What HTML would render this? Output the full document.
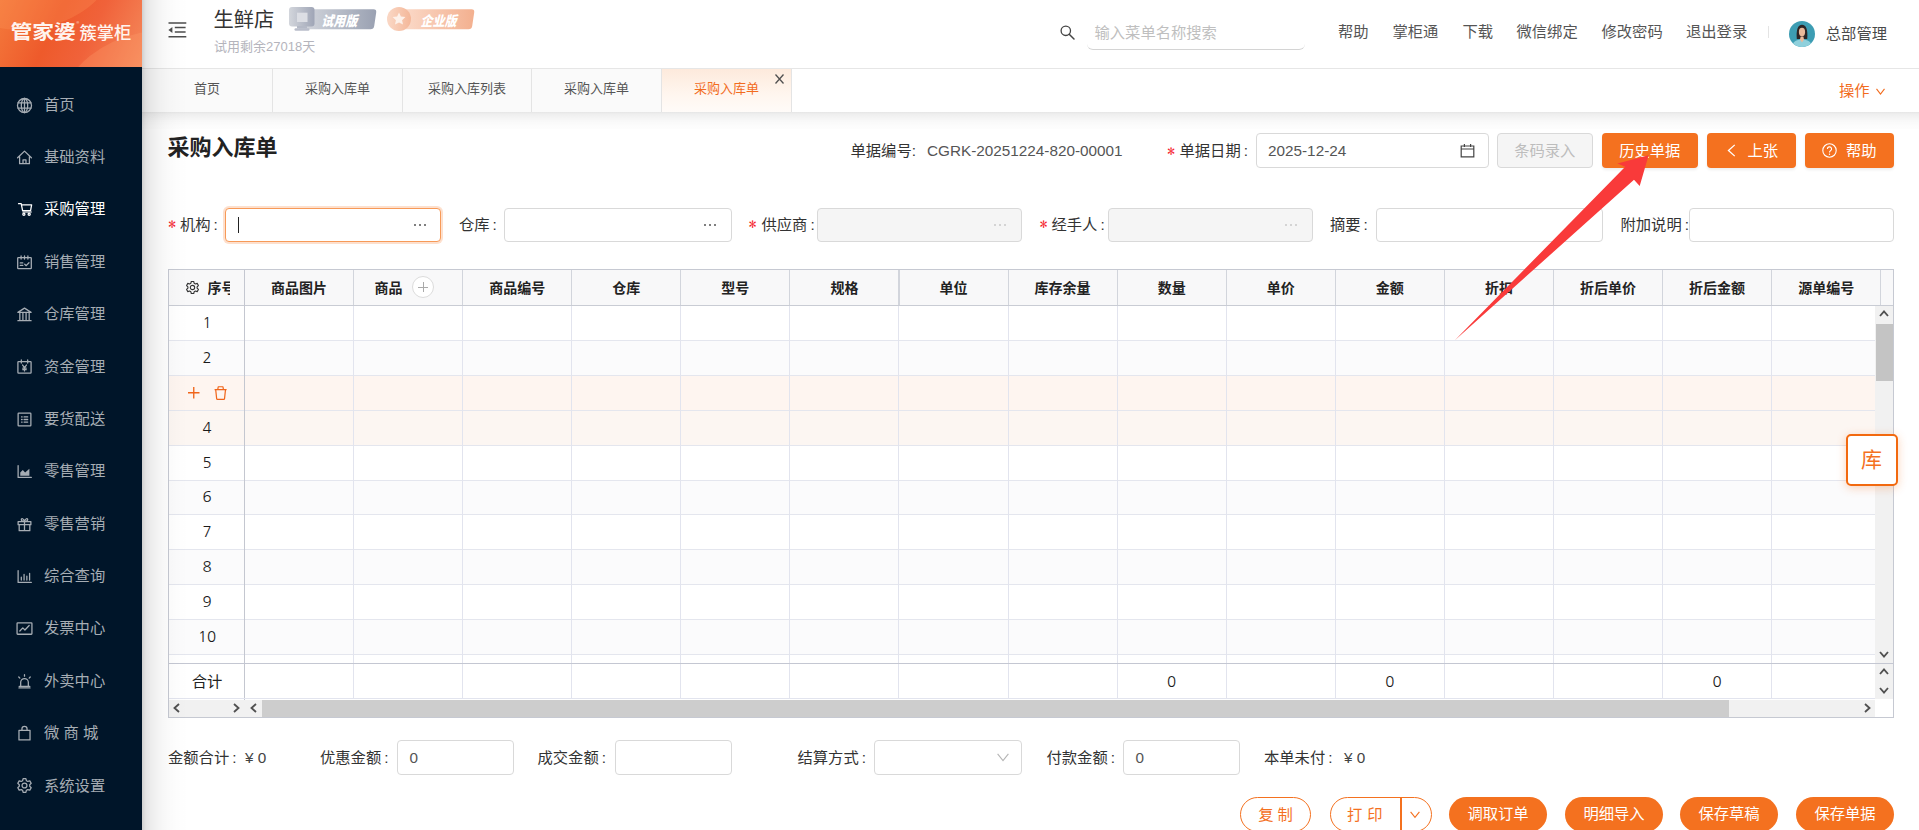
<!DOCTYPE html>
<html lang="zh-CN">
<head>
<meta charset="utf-8">
<title>采购入库单</title>
<style>
*{box-sizing:border-box;margin:0;padding:0}
html,body{width:1919px;height:830px;overflow:hidden;background:#fff}
body{position:relative;font-family:"Liberation Sans","Noto Sans CJK SC",sans-serif;font-size:15.3px;color:#333}
.abs{position:absolute}
/* sidebar */
#side{position:absolute;left:0;top:0;width:142px;height:830px;background:#001529;z-index:5}
#logo{position:absolute;left:0;top:0;width:142px;height:67px;overflow:hidden;
 background:linear-gradient(115deg,#f47a3c 0%,#ee5a2b 38%,#f0623a 62%,#f58a5c 100%)}
#logo .w1{position:absolute;left:-40px;top:-62px;width:150px;height:90px;border-radius:50%;background:rgba(255,150,90,.28);transform:rotate(-12deg)}
#logo .w2{position:absolute;left:60px;top:38px;width:140px;height:80px;border-radius:50%;background:rgba(255,160,110,.28);transform:rotate(-25deg)}
#logo b{position:absolute;color:#fff4ef;white-space:nowrap;line-height:1}
#logo .l1{left:10.5px;top:20.8px;font-size:21.8px;font-weight:700;letter-spacing:0;transform:scaleY(.88);transform-origin:0 100%}
#logo .l2{left:79.5px;top:24.6px;font-size:17.3px;font-weight:500}
#logo .r{left:76.5px;top:21.5px;font-size:3.5px;font-weight:400}
.m{position:absolute;left:0;width:142px;height:40px;line-height:40px;color:#a6adb4;font-size:15.3px;white-space:nowrap}
.m.on{color:#fff}
.m .mi{position:absolute;left:16.2px;top:12.3px;width:17px;height:17px}
.m span{position:absolute;left:44px;top:.4px}
/* header */
#hdr{position:absolute;left:142px;top:0;width:1777px;height:69px;background:#fff;border-bottom:1px solid #e6e6e6}
#shadowL{position:absolute;left:142px;top:0;width:46px;height:830px;background:linear-gradient(90deg,rgba(0,0,0,.19) 0,rgba(0,0,0,.14) 2px,rgba(0,0,0,.105) 4px,rgba(0,0,0,.08) 8px,rgba(0,0,0,.06) 13px,rgba(0,0,0,.04) 18px,rgba(0,0,0,.02) 26px,rgba(0,0,0,.008) 36px,rgba(0,0,0,0) 46px);z-index:4;pointer-events:none}
.hl1{position:absolute;top:21px;line-height:22px;font-size:15.3px;color:#555;white-space:nowrap}
/* tabs */
#tabs{position:absolute;left:142px;top:69px;width:1777px;height:43px;background:#fff}
.tab{position:absolute;top:0;height:43px;background:#fafafa;border-right:1px solid #e4e4e4;text-align:center;line-height:40px;font-size:13px;color:#555}
.tab.on{background:linear-gradient(180deg,#fdeadc 0%,#fff6ef 60%,#fffbf8 100%);color:#f26c1e;line-height:40.8px}
#tabshadow{position:absolute;left:142px;top:112px;width:1777px;height:17px;background:linear-gradient(180deg,rgba(0,0,0,.1) 0,rgba(0,0,0,.068) 2px,rgba(0,0,0,.05) 4.5px,rgba(0,0,0,.03) 8px,rgba(0,0,0,.018) 11px,rgba(0,0,0,.01) 14px,rgba(0,0,0,.007) 17px)}
/* form */
.lb{position:absolute;margin-top:.5px;line-height:22px;font-size:15.3px;color:#333;white-space:nowrap}
.star{position:absolute;color:#f5222d;font-size:15.5px;line-height:22px;font-family:"IPAGothic","Liberation Mono",monospace}
.ip{position:absolute;height:34.5px;border:1px solid #d9d9d9;border-radius:4px;background:#fff}
.ip.dis{background:#f5f5f5}
.dots{position:absolute;top:15.3px;width:12px;height:3px}
.dots i{position:absolute;top:0;width:2px;height:2px;border-radius:50%;background:#555}
.dis .dots i{background:#c8c8c8}
.btn{position:absolute;top:133px;height:34.5px;border-radius:4px;background:#f4711f;color:#fff;font-size:15.3px;line-height:35.4px;text-align:center;white-space:nowrap;box-shadow:0 2px 3px rgba(0,0,0,.07)}
/* table */
#tb{position:absolute;left:168px;top:269px;width:1725.5px;height:449px;border:1px solid #c6c9d2;background:#fff}
.thbg{position:absolute;left:169px;top:270px;width:1723.5px;height:35px;background:#f8f8f9}
.th{position:absolute;top:277px;line-height:22px;text-align:center;font-weight:700;font-size:14px;color:#222;white-space:nowrap}
.rw{position:absolute;left:169px;width:1706px}
.hl{position:absolute;left:169px;width:1706px;height:1px;background:#e4e6ee}
.vl{position:absolute;top:270px;width:1px;height:428.5px;background:#e2e4ee}
.rn{position:absolute;left:169px;width:76px;text-align:center;line-height:20px;font-size:15px;color:#1a1a1a;font-family:"NanumGothic","Liberation Sans",sans-serif}
.fv{position:absolute;top:672.2px;line-height:20px;text-align:center;font-size:15px;color:#1a1a1a;font-family:"NanumGothic","Liberation Sans",sans-serif}
.plus{position:absolute;left:58.5px;top:-1px;width:22px;height:22px;border:1px solid #dcdcdc;border-radius:50%;background:#fff}
.plus:before{content:"";position:absolute;left:5px;top:9.5px;width:10px;height:1px;background:#aaa}
.plus:after{content:"";position:absolute;left:9.5px;top:5px;width:1px;height:10px;background:#aaa}
/* bottom buttons */
.pb{position:absolute;top:796.5px;height:35px;border-radius:18px;font-size:15.3px;line-height:33px;text-align:center;white-space:nowrap}
.pb.f{background:#f4711f;color:#fff}
.pb.o{background:#fff;border:1.3px solid #f4711f;color:#f4711f}
svg{display:block;overflow:visible}
</style>
</head>
<body>
<!-- ===== sidebar ===== -->
<div id="side">
 <div id="logo"><div class="w1"></div><div class="w2"></div><b class="l1">管家婆</b><b class="r">®</b><b class="l2">簇掌柜</b></div>
<div class="m" style="top:84.3px"><svg class="mi" viewBox="0 0 16 16"><circle cx="8" cy="8" r="6.6" fill="none" stroke="#a6adb4" stroke-width="1.2" stroke-linecap="round" stroke-linejoin="round"/><ellipse cx="8" cy="8" rx="3" ry="6.6" fill="none" stroke="#a6adb4" stroke-width="1.2" stroke-linecap="round" stroke-linejoin="round"/><path d="M8 1.4v13.2M1.8 5.6h12.4M1.8 10.4h12.4" fill="none" stroke="#a6adb4" stroke-width="1.2" stroke-linecap="round" stroke-linejoin="round"/></svg><span>首页</span></div>
<div class="m" style="top:136.7px"><svg class="mi" viewBox="0 0 16 16"><path d="M1.5 8.2 8 2l6.5 6.2M3.4 7v6.8h9.2V7M6.6 13.8v-3.6h2.8v3.6" fill="none" stroke="#a6adb4" stroke-width="1.2" stroke-linecap="round" stroke-linejoin="round"/></svg><span>基础资料</span></div>
<div class="m on" style="top:189.1px"><svg class="mi" viewBox="0 0 16 16"><g transform="translate(.8 .6)"><path d="M1.6 1.9h2.5l1.3 6.5h7.5l1-5.3H4.5" fill="none" stroke="#ffffff" stroke-width="1.2" stroke-linecap="round" stroke-linejoin="round"/><rect x="5.3" y="8.8" width="8.7" height="1.9" fill="#ffffff" opacity=".55"/><circle cx="6.6" cy="11.9" r="1" fill="none" stroke="#ffffff" stroke-width="1.2" stroke-linecap="round" stroke-linejoin="round"/><circle cx="11.6" cy="11.9" r="1" fill="none" stroke="#ffffff" stroke-width="1.2" stroke-linecap="round" stroke-linejoin="round"/></g></svg><span>采购管理</span></div>
<div class="m" style="top:241.4px"><svg class="mi" viewBox="0 0 16 16"><rect x="1.6" y="3.4" width="12.8" height="10.4" rx=".6" fill="none" stroke="#a6adb4" stroke-width="1.2" stroke-linecap="round" stroke-linejoin="round"/><path d="M4.8 1.8v3M8 1.8v3M11.2 1.8v3M4 8.4h2.4M4 10.8h2.4M8.2 9.6l1.4 1.4 2.6-2.8" fill="none" stroke="#a6adb4" stroke-width="1.2" stroke-linecap="round" stroke-linejoin="round"/></svg><span>销售管理</span></div>
<div class="m" style="top:293.8px"><svg class="mi" viewBox="0 0 16 16"><path d="M1.8 6 8 2l6.2 4zM1.8 13.8h12.4M3.6 6.4v7M6.5 6.4v7M9.5 6.4v7M12.4 6.4v7" fill="none" stroke="#a6adb4" stroke-width="1.2" stroke-linecap="round" stroke-linejoin="round"/></svg><span>仓库管理</span></div>
<div class="m" style="top:346.2px"><svg class="mi" viewBox="0 0 16 16"><rect x="1.8" y="3.4" width="12.4" height="10.8" rx=".6" fill="none" stroke="#a6adb4" stroke-width="1.2" stroke-linecap="round" stroke-linejoin="round"/><path d="M5 1.8v3M11 1.8v3M6.2 6.6 8 9l1.8-2.4M8 9v3.2M6.4 9.6h3.2M6.4 11h3.2" fill="none" stroke="#a6adb4" stroke-width="1.2" stroke-linecap="round" stroke-linejoin="round"/></svg><span>资金管理</span></div>
<div class="m" style="top:398.6px"><svg class="mi" viewBox="0 0 16 16"><rect x="2" y="2" width="12" height="12" rx=".6" fill="none" stroke="#a6adb4" stroke-width="1.2" stroke-linecap="round" stroke-linejoin="round"/><path d="M5.2 5.6h.6M5.2 8h.6M5.2 10.4h.6M7.6 5.6h3.4M7.6 8h3.4M7.6 10.4h3.4" fill="none" stroke="#a6adb4" stroke-width="1.2" stroke-linecap="round" stroke-linejoin="round"/></svg><span>要货配送</span></div>
<div class="m" style="top:451.0px"><svg class="mi" viewBox="0 0 16 16"><path d="M2 2.4v11.2h12.4" fill="none" stroke="#a6adb4" stroke-width="1.2" stroke-linecap="round" stroke-linejoin="round"/><path d="M4 12V9l2.4-2.4L8.6 9l4-3.6V12z" fill="#a6adb4" stroke="none"/></svg><span>零售管理</span></div>
<div class="m" style="top:503.3px"><svg class="mi" viewBox="0 0 16 16"><rect x="2" y="5.2" width="12" height="3" fill="none" stroke="#a6adb4" stroke-width="1.2" stroke-linecap="round" stroke-linejoin="round"/><path d="M3 8.2v5.6h10V8.2M8 5.2v8.6M8 5.2C6.4 5.2 5 4.6 5 3.4 5 2 7.2 2 8 5.2zM8 5.2c1.600 0 3-.6 3-1.800C11 2 8.800 2 8 5.200z" fill="none" stroke="#a6adb4" stroke-width="1.2" stroke-linecap="round" stroke-linejoin="round"/></svg><span>零售营销</span></div>
<div class="m" style="top:555.7px"><svg class="mi" viewBox="0 0 16 16"><path d="M2 2.400v11.200h12.400M5 11.400V8.600M7.600 11.400V6M10.200 11.400V7.600M12.800 11.400V5" fill="none" stroke="#a6adb4" stroke-width="1.2" stroke-linecap="round" stroke-linejoin="round"/></svg><span>综合查询</span></div>
<div class="m" style="top:608.1px"><svg class="mi" viewBox="0 0 16 16"><rect x="1" y="2.600" width="14" height="10.800" rx=".6" fill="none" stroke="#a6adb4" stroke-width="1.2" stroke-linecap="round" stroke-linejoin="round"/><path d="M3.600 10.400 6.400 7.400l2 2 4-4.200" fill="none" stroke="#a6adb4" stroke-width="1.2" stroke-linecap="round" stroke-linejoin="round"/></svg><span>发票中心</span></div>
<div class="m" style="top:660.5px"><svg class="mi" viewBox="0 0 16 16"><path d="M4.400 12.600V8.800a3.600 3.600 0 0 1 7.200 0v3.800M2.800 14h10.400M3 12.600h10M8 1.600v1.400M2.600 3.800l1 1M13.400 3.800l-1 1" fill="none" stroke="#a6adb4" stroke-width="1.2" stroke-linecap="round" stroke-linejoin="round"/></svg><span>外卖中心</span></div>
<div class="m" style="top:712.9px"><svg class="mi" viewBox="0 0 16 16"><path d="M2.800 5h10.400v9H2.800zM5.600 5V3.600a2.400 2.400 0 0 1 4.800 0V5" fill="none" stroke="#a6adb4" stroke-width="1.2" stroke-linecap="round" stroke-linejoin="round"/></svg><span>微 商 城</span></div>
<div class="m" style="top:765.2px"><svg class="mi" viewBox="0 0 16 16"><circle cx="8" cy="8" r="2.300" fill="none" stroke="#a6adb4" stroke-width="1.2" stroke-linecap="round" stroke-linejoin="round"/><path d="M6.700 1.600h2.600l.5 1.900 1.300.7 1.900-.6 1.300 2.300-1.400 1.400v1.400l1.400 1.400-1.300 2.300-1.900-.6-1.300.7-.5 1.900H6.700l-.5-1.900-1.300-.7-1.900.6-1.300-2.300 1.400-1.400V7.300L1.700 5.900 3 3.600l1.900.6 1.300-.7z" fill="none" stroke="#a6adb4" stroke-width="1.2" stroke-linecap="round" stroke-linejoin="round"/></svg><span>系统设置</span></div>

</div>
<div id="shadowL"></div>

<!-- ===== header ===== -->
<div id="hdr">
 <svg class="abs" style="left:26px;top:22px" width="19" height="16" viewBox="0 0 19 16"><path d="M.5.900h17.800M6.800 5.500h10.800M6.800 10.100h10.800M.5 14.800h17.800" stroke="#4d4d4d" stroke-width="1.500" fill="none"/><path d="M.4 8 4.400 5v6z" fill="#4d4d4d"/></svg>
 <div class="abs" style="left:71.500px;top:5.500px;font-size:20.300px;line-height:28px;color:#333;white-space:nowrap">生鲜店</div>
 <div class="abs" style="left:72px;top:37.500px;font-size:13px;line-height:18px;color:#b4b4bc;white-space:nowrap">试用剩余27018天</div>
 <!-- badge trial -->
 <svg class="abs" style="left:147px;top:6px" width="88" height="26" viewBox="0 0 88 26">
  <defs><linearGradient id="g1" x1="0" x2="1" y1="0" y2="0"><stop offset="0" stop-color="#d6d9df"/><stop offset="1" stop-color="#9aa1b2"/></linearGradient>
  <linearGradient id="g1b" x1="0" x2="1" y1="0" y2="0"><stop offset="0" stop-color="#d3d6dc"/><stop offset="1" stop-color="#9fa5b6"/></linearGradient></defs>
  <path d="M12 3.200h72.500q3.200 0 2.700 3.200l-2 13.600q-.5 3.200-3.700 3.200H10z" fill="url(#g1)"/>
  <rect x="0" y="1" width="25.500" height="19.500" rx="3" fill="url(#g1b)"/><rect x="8" y="20" width="10" height="2.500" fill="#b4b9c6"/><rect x="5.500" y="22.200" width="15" height="2.600" rx="1.200" fill="#b9bdca"/>
  <rect x="8" y="6.700" width="10.500" height="9.300" fill="#dcdee4"/>
  <text x="0" y="0" font-family="'Liberation Sans','Noto Sans CJK SC',sans-serif" font-size="13.800" font-weight="900" fill="#fff" transform="translate(32.200 20.300) skewX(-14) scale(.87 1)">试用版</text>
 </svg>
 <!-- badge enterprise -->
 <svg class="abs" style="left:245px;top:6px" width="88" height="26" viewBox="0 0 88 26">
  <defs><linearGradient id="g2" x1="0" x2="1" y1="0" y2="0"><stop offset="0" stop-color="#fbdccc"/><stop offset="1" stop-color="#f3b08f"/></linearGradient>
  <linearGradient id="g2b" x1="0" x2="1" y1="0" y2="0"><stop offset="0" stop-color="#fad8c6"/><stop offset="1" stop-color="#f4b799"/></linearGradient></defs>
  <path d="M12 3.200h72.500q3.200 0 2.700 3.200l-2 13.600q-.5 3.200-3.700 3.200H12z" fill="url(#g2)"/>
  <circle cx="12" cy="13" r="12" fill="url(#g2b)"/>
  <path d="M12 6.500l1.900 4.100 4.500.5-3.300 3.100.9 4.400L12 16.400 8 18.600l.9-4.400-3.300-3.100 4.500-.5z" fill="#fdf1ea"/>
  <text x="0" y="0" font-family="'Liberation Sans','Noto Sans CJK SC',sans-serif" font-size="13.800" font-weight="900" fill="#fff" transform="translate(33.600 19.800) skewX(-14) scale(.87 1)">企业版</text>
 </svg>
 <!-- search -->
 <svg class="abs" style="left:918px;top:25px" width="15" height="15" viewBox="0 0 15 15"><circle cx="5.800" cy="5.800" r="4.700" fill="none" stroke="#444" stroke-width="1.300"/><path d="M9.200 9.200 14 14" stroke="#444" stroke-width="1.500" stroke-linecap="round"/></svg>
 <div class="abs" style="left:945px;top:14px;width:218px;height:36px;border-bottom:1px solid #d4d4d4;border-radius:6px"></div>
 <div class="abs" style="left:952.500px;top:21.500px;font-size:15.3px;line-height:22px;color:#bfbfbf;white-space:nowrap">输入菜单名称搜索</div>
 <div class="hl1" style="left:1196px">帮助</div>
 <div class="hl1" style="left:1250.500px">掌柜通</div>
 <div class="hl1" style="left:1320.500px">下载</div>
 <div class="hl1" style="left:1374.500px">微信绑定</div>
 <div class="hl1" style="left:1459.500px">修改密码</div>
 <div class="hl1" style="left:1544px">退出登录</div>
 <div class="abs" style="left:1625.500px;top:26px;width:1px;height:12px;background:#e4e4e4"></div>
 <!-- avatar -->
 <svg class="abs" style="left:1647px;top:20.500px" width="26" height="26" viewBox="0 0 26 26">
  <defs><clipPath id="av"><circle cx="13" cy="13" r="13"/></clipPath></defs>
  <g clip-path="url(#av)"><rect width="26" height="26" fill="#3d9db3"/>
  <path d="M7.800 18c-.8-9 1-14.200 5.200-14.200s6 5.200 5.200 14.200z" fill="#2e2424"/>
  <ellipse cx="13" cy="11" rx="3.100" ry="4.200" fill="#eab899"/>
  <path d="M3 27c0-6 4-8.500 10-8.500s10 2.500 10 8.500z" fill="#8fd0dc"/>
  <path d="M11 18.500 13 21.500l2-3-.6-3h-2.800z" fill="#eab899"/></g>
 </svg>
 <div class="hl1" style="left:1683.800px;top:23px;color:#4a4a4a">总部管理</div>
</div>

<!-- ===== tabs ===== -->
<div id="tabs">
 <div class="tab" style="left:0;width:131px">首页</div>
 <div class="tab" style="left:131px;width:130px">采购入库单</div>
 <div class="tab" style="left:261px;width:129px">采购入库列表</div>
 <div class="tab" style="left:390px;width:130px">采购入库单</div>
 <div class="tab on" style="left:520px;width:130px">采购入库单</div>
 <svg class="abs" style="left:632.500px;top:5px" width="9" height="10" viewBox="0 0 9 10"><path d="M.5.5l8 9M8.500.5l-8 9" stroke="#505050" stroke-width="1.300" fill="none"/></svg>
 <div class="abs" style="left:1697px;top:10.500px;font-size:15.3px;line-height:22px;color:#f26c1e;white-space:nowrap">操作</div>
 <svg class="abs" style="left:1733.500px;top:19px" width="9" height="7" viewBox="0 0 9 7"><path d="M.5.800 4.500 6 8.500.8" stroke="#f26c1e" stroke-width="1.100" fill="none"/></svg>
</div>
<div id="tabshadow"></div>

<!-- ===== title row ===== -->
<div class="abs" style="left:167.500px;top:131.800px;font-size:22px;font-weight:700;line-height:32px;color:#222;white-space:nowrap">采购入库单</div>
<div class="lb" style="left:850.500px;top:139.500px">单据编号:</div>
<div class="lb" style="left:927px;top:139.500px;color:#555">CGRK-20251224-820-00001</div>
<div class="star" style="left:1167.3px;top:139.9px">*</div>
<div class="lb" style="left:1179.500px;top:139.500px">单据日期<span style="margin-left:3px">:</span></div>
<div class="ip" style="left:1255.500px;top:133px;width:233px"></div>
<div class="lb" style="left:1268px;top:139.500px;color:#555">2025-12-24</div>
<svg class="abs" style="left:1460px;top:142.500px" width="15" height="15" viewBox="0 0 15 15"><path d="M1.200 3h12.600v10.800H1.200zM1.200 6h12.600M4.400 1v3M10.600 1v3" fill="none" stroke="#444" stroke-width="1.200"/></svg>
<div class="btn" style="left:1497px;width:95.500px;background:#f5f5f5;border:1px solid #d9d9d9;color:#bdbdbd;box-shadow:none;line-height:33.400px">条码录入</div>
<div class="btn" style="left:1602px;width:95.500px">历史单据</div>
<div class="btn" style="left:1707px;width:88.500px"><svg class="abs" style="left:19.500px;top:11px" width="9" height="13" viewBox="0 0 8 12"><path d="M7 .8 1.200 6 7 11.200" fill="none" stroke="#fff" stroke-width="1.200"/></svg><span style="position:absolute;left:40.500px">上张</span></div>
<div class="btn" style="left:1804.500px;width:89px"><svg class="abs" style="left:17.800px;top:10.300px" width="15" height="15" viewBox="0 0 15 15"><circle cx="7.500" cy="7.500" r="6.700" fill="none" stroke="#fff" stroke-width="1.100"/><path d="M5.400 6a2.100 2.100 0 1 1 3.100 1.800c-.7.400-1 .8-1 1.600" fill="none" stroke="#fff" stroke-width="1.100"/><circle cx="7.500" cy="11.200" r=".7" fill="#fff"/></svg><span style="position:absolute;left:41.500px">帮助</span></div>

<!-- ===== form row ===== -->
<div class="star" style="left:168.3px;top:213.4px">*</div>
<div class="lb" style="left:180px;top:213px">机构<span style="margin-left:3px">:</span></div>
<div class="ip" style="left:224.500px;top:207.500px;width:216px;border-color:#f79a58;box-shadow:0 0 0 2px rgba(244,113,31,.22)">
 <div class="abs" style="left:12.500px;top:8.500px;width:1px;height:16px;background:#222"></div>
 <div class="dots" style="left:188.3px"><i style="left:0"></i><i style="left:5px"></i><i style="left:10px"></i></div>
</div>
<div class="lb" style="left:459px;top:213px">仓库<span style="margin-left:3px">:</span></div>
<div class="ip" style="left:503.500px;top:207.500px;width:228.500px"><div class="dots" style="left:199.8px"><i style="left:0"></i><i style="left:5px"></i><i style="left:10px"></i></div></div>
<div class="star" style="left:748.8px;top:213.4px">*</div>
<div class="lb" style="left:761.500px;top:213px">供应商<span style="margin-left:3px">:</span></div>
<div class="ip dis" style="left:816.500px;top:207.500px;width:205.500px"><div class="dots" style="left:176.8px"><i style="left:0"></i><i style="left:5px"></i><i style="left:10px"></i></div></div>
<div class="star" style="left:1039.8px;top:213.4px">*</div>
<div class="lb" style="left:1051.500px;top:213px">经手人<span style="margin-left:3px">:</span></div>
<div class="ip dis" style="left:1107.500px;top:207.500px;width:205.500px"><div class="dots" style="left:176.3px"><i style="left:0"></i><i style="left:5px"></i><i style="left:10px"></i></div></div>
<div class="lb" style="left:1330px;top:213px">摘要<span style="margin-left:3px">:</span></div>
<div class="ip" style="left:1376px;top:207.500px;width:226.500px"></div>
<div class="lb" style="left:1620.500px;top:213px">附加说明<span style="margin-left:3px">:</span></div>
<div class="ip" style="left:1688.500px;top:207.500px;width:205px"></div>

<!-- ===== table ===== -->
<div id="tb"></div>
<div class="thbg"></div>
<div class="rw" style="top:305.50px;height:34.90px;background:#ffffff"></div>
<div class="rw" style="top:340.40px;height:34.90px;background:#fbfbfc"></div>
<div class="rw" style="top:375.30px;height:34.90px;background:#fef5f0"></div>
<div class="rw" style="top:410.20px;height:34.90px;background:#fcf6f2"></div>
<div class="rw" style="top:445.10px;height:34.90px;background:#ffffff"></div>
<div class="rw" style="top:480.00px;height:34.90px;background:#fbfbfc"></div>
<div class="rw" style="top:514.90px;height:34.90px;background:#ffffff"></div>
<div class="rw" style="top:549.80px;height:34.90px;background:#fbfbfc"></div>
<div class="rw" style="top:584.70px;height:34.90px;background:#ffffff"></div>
<div class="rw" style="top:619.60px;height:34.90px;background:#fbfbfc"></div>
<div class="rw" style="top:654.50px;height:8.50px;background:#ffffff"></div>
<div class="hl" style="top:339.90px"></div>
<div class="hl" style="top:374.80px"></div>
<div class="hl" style="top:409.70px"></div>
<div class="hl" style="top:444.60px"></div>
<div class="hl" style="top:479.50px"></div>
<div class="hl" style="top:514.40px"></div>
<div class="hl" style="top:549.30px"></div>
<div class="hl" style="top:584.20px"></div>
<div class="hl" style="top:619.10px"></div>
<div class="hl" style="top:654.00px"></div>
<div class="rn" style="top:313px">1</div>
<div class="rn" style="top:348px">2</div>
<div class="rn" style="top:418px">4</div>
<div class="rn" style="top:453px">5</div>
<div class="rn" style="top:487px">6</div>
<div class="rn" style="top:522px">7</div>
<div class="rn" style="top:557px">8</div>
<div class="rn" style="top:592px">9</div>
<div class="rn" style="top:627px">10</div>
<div class="vl" style="left:244.00px"></div>
<div class="vl" style="left:353.08px"></div>
<div class="vl" style="left:462.16px"></div>
<div class="vl" style="left:571.24px"></div>
<div class="vl" style="left:680.32px"></div>
<div class="vl" style="left:789.40px"></div>
<div class="vl" style="left:898.48px"></div>
<div class="vl" style="left:1007.56px"></div>
<div class="vl" style="left:1116.64px"></div>
<div class="vl" style="left:1225.72px"></div>
<div class="vl" style="left:1334.80px"></div>
<div class="vl" style="left:1443.88px"></div>
<div class="vl" style="left:1552.96px"></div>
<div class="vl" style="left:1662.04px"></div>
<div class="vl" style="left:1771.12px"></div>
<div class="vl" style="left:1880.20px"></div>

<!-- header bottom line + left col line -->
<div class="abs" style="left:244.00px;top:270px;width:1px;height:35px;background:#d2d5dc"></div>
<div class="abs" style="left:353.08px;top:270px;width:1px;height:35px;background:#d2d5dc"></div>
<div class="abs" style="left:462.16px;top:270px;width:1px;height:35px;background:#d2d5dc"></div>
<div class="abs" style="left:571.24px;top:270px;width:1px;height:35px;background:#d2d5dc"></div>
<div class="abs" style="left:680.32px;top:270px;width:1px;height:35px;background:#d2d5dc"></div>
<div class="abs" style="left:789.40px;top:270px;width:1px;height:35px;background:#d2d5dc"></div>
<div class="abs" style="left:898.48px;top:270px;width:2px;height:35px;background:#d2d5dc"></div>
<div class="abs" style="left:1007.56px;top:270px;width:1px;height:35px;background:#d2d5dc"></div>
<div class="abs" style="left:1116.64px;top:270px;width:1px;height:35px;background:#d2d5dc"></div>
<div class="abs" style="left:1225.72px;top:270px;width:1px;height:35px;background:#d2d5dc"></div>
<div class="abs" style="left:1334.80px;top:270px;width:1px;height:35px;background:#d2d5dc"></div>
<div class="abs" style="left:1443.88px;top:270px;width:1px;height:35px;background:#d2d5dc"></div>
<div class="abs" style="left:1552.96px;top:270px;width:1px;height:35px;background:#d2d5dc"></div>
<div class="abs" style="left:1662.04px;top:270px;width:1px;height:35px;background:#d2d5dc"></div>
<div class="abs" style="left:1771.12px;top:270px;width:1px;height:35px;background:#d2d5dc"></div>
<div class="abs" style="left:1880.20px;top:270px;width:1px;height:35px;background:#d2d5dc"></div>

<div class="abs" style="left:169px;top:305px;width:1723.500px;height:1px;background:#c9ccd4"></div>
<div class="abs" style="left:244px;top:270px;width:1px;height:447px;background:#c4c7d0"></div>
<svg class="abs" style="left:184.500px;top:279.500px" width="15" height="15" viewBox="0 0 16 16"><circle cx="8" cy="8" r="2.300" fill="none" stroke="#333" stroke-width="1.200"/><path d="M6.700 1.600h2.600l.5 1.900 1.300.7 1.900-.6 1.300 2.300-1.400 1.400v1.400l1.400 1.400-1.300 2.300-1.900-.6-1.300.7-.5 1.900H6.700l-.5-1.900-1.300-.7-1.900.6-1.300-2.300 1.400-1.400V7.300L1.700 5.900 3 3.600l1.900.6 1.300-.7z" fill="none" stroke="#333" stroke-width="1.200" stroke-linejoin="round"/></svg>
<div class="abs" style="left:207.500px;top:277px;width:22.500px;overflow:hidden;font-size:14px;font-weight:700;line-height:22px;color:#222;white-space:nowrap">序号</div>
<div class="th" style="left:244.50px;width:109.08px">商品图片</div>
<div class="th" style="left:353.58px;width:109.08px"><span style="position:relative;left:-19.5px">商品</span><i class="plus"></i></div>
<div class="th" style="left:462.66px;width:109.08px">商品编号</div>
<div class="th" style="left:571.74px;width:109.08px">仓库</div>
<div class="th" style="left:680.82px;width:109.08px">型号</div>
<div class="th" style="left:789.90px;width:109.08px">规格</div>
<div class="th" style="left:898.98px;width:109.08px">单位</div>
<div class="th" style="left:1008.06px;width:109.08px">库存余量</div>
<div class="th" style="left:1117.14px;width:109.08px">数量</div>
<div class="th" style="left:1226.22px;width:109.08px">单价</div>
<div class="th" style="left:1335.30px;width:109.08px">金额</div>
<div class="th" style="left:1444.38px;width:109.08px">折扣</div>
<div class="th" style="left:1553.46px;width:109.08px">折后单价</div>
<div class="th" style="left:1662.54px;width:109.08px">折后金额</div>
<div class="th" style="left:1771.62px;width:109.08px">源单编号</div>

<!-- row 3 icons -->
<svg class="abs" style="left:187.800px;top:387.200px" width="11.500" height="11.500" viewBox="0 0 12 12"><path d="M6 0v12M0 6h12" stroke="#f0651a" stroke-width="1.400"/></svg>
<svg class="abs" style="left:213.600px;top:385.900px" width="13.200" height="14.100" viewBox="0 0 14 15"><path d="M.6 3.800h12.800M4 3.600 4.500.8h5l.5 2.800M1.800 4l1 9.400q.1.800.9.800h6.600q.8 0 .9-.8l1-9.400" fill="none" stroke="#f0651a" stroke-width="1.300" stroke-linejoin="round"/></svg>
<!-- vertical scrollbar -->
<div class="abs" style="left:1875px;top:305.500px;width:17.500px;height:357.500px;background:#f1f1f1"></div>
<div class="abs" style="left:1875.500px;top:323.500px;width:17px;height:57px;background:#c4c4c4"></div>
<svg class="abs" style="left:1879px;top:310px" width="10" height="7" viewBox="0 0 10 7"><path d="M1 6 5 1.500 9 6" fill="none" stroke="#505050" stroke-width="1.850"/></svg>
<svg class="abs" style="left:1879px;top:650.500px" width="10" height="7" viewBox="0 0 10 7"><path d="M1 1 5 5.500 9 1" fill="none" stroke="#505050" stroke-width="1.850"/></svg>
<!-- footer row -->
<div class="abs" style="left:1875px;top:663.500px;width:17.500px;height:35px;background:#f1f1f1"></div><div class="abs" style="left:1875px;top:698.500px;width:17.500px;height:18.500px;background:#fff"></div>
<div class="abs" style="left:169px;top:662.500px;width:1723.500px;height:1px;background:#c4c7d2"></div>
<div class="abs" style="left:169px;top:698px;width:1706px;height:1px;background:#e2e4ee"></div>
<div class="abs" style="left:169px;top:671.7px;width:76px;text-align:center;line-height:20px;font-size:15.3px;color:#222">合计</div>
<div class="fv" style="left:1117.14px;width:109.08px">0</div>
<div class="fv" style="left:1335.30px;width:109.08px">0</div>
<div class="fv" style="left:1662.54px;width:109.08px">0</div>

<svg class="abs" style="left:1879px;top:668px" width="10" height="7" viewBox="0 0 10 7"><path d="M1 6 5 1.500 9 6" fill="none" stroke="#505050" stroke-width="1.850"/></svg>
<svg class="abs" style="left:1879px;top:686.500px" width="10" height="7" viewBox="0 0 10 7"><path d="M1 1 5 5.500 9 1" fill="none" stroke="#505050" stroke-width="1.850"/></svg>

<!-- horizontal scrollbar -->
<div class="abs" style="left:169px;top:699.500px;width:1706px;height:17.500px;background:#f1f1f1"></div>
<div class="abs" style="left:262px;top:699.500px;width:1466.500px;height:17.500px;background:#cdcdcd"></div>
<svg class="abs" style="left:173px;top:703px" width="7" height="10" viewBox="0 0 7 10"><path d="M6 1 1.500 5 6 9" fill="none" stroke="#505050" stroke-width="1.850"/></svg>
<svg class="abs" style="left:232.500px;top:703px" width="7" height="10" viewBox="0 0 7 10"><path d="M1 1 5.500 5 1 9" fill="none" stroke="#505050" stroke-width="1.850"/></svg>
<svg class="abs" style="left:249.500px;top:703px" width="7" height="10" viewBox="0 0 7 10"><path d="M6 1 1.500 5 6 9" fill="none" stroke="#505050" stroke-width="1.850"/></svg>
<svg class="abs" style="left:1863.500px;top:703px" width="7" height="10" viewBox="0 0 7 10"><path d="M1 1 5.500 5 1 9" fill="none" stroke="#505050" stroke-width="1.850"/></svg>

<!-- ===== totals row ===== -->
<div class="lb" style="left:168px;top:746.500px">金额合计<span style="margin-left:3px">:</span></div>
<div class="lb" style="left:245px;top:746.500px;color:#444">¥ 0</div>
<div class="lb" style="left:320px;top:746.500px">优惠金额<span style="margin-left:3px">:</span></div>
<div class="ip" style="left:396.500px;top:740px;width:117px"></div>
<div class="lb" style="left:409.500px;top:746.500px;color:#555">0</div>
<div class="lb" style="left:537.500px;top:746.500px">成交金额<span style="margin-left:3px">:</span></div>
<div class="ip" style="left:615px;top:740px;width:117px"></div>
<div class="lb" style="left:797.500px;top:746.500px">结算方式<span style="margin-left:3px">:</span></div>
<div class="ip" style="left:874px;top:740px;width:148px"></div>
<svg class="abs" style="left:996.500px;top:753px" width="12" height="9" viewBox="0 0 12 9"><path d="M.6.800 6 7.600 11.400.8" fill="none" stroke="#b5b5b5" stroke-width="1.100"/></svg>
<div class="lb" style="left:1046.500px;top:746.500px">付款金额<span style="margin-left:3px">:</span></div>
<div class="ip" style="left:1122.500px;top:740px;width:117px"></div>
<div class="lb" style="left:1135.500px;top:746.500px;color:#555">0</div>
<div class="lb" style="left:1264px;top:746.500px">本单未付<span style="margin-left:3px">:</span></div>
<div class="lb" style="left:1344px;top:746.500px;color:#444">¥ 0</div>

<!-- ===== bottom buttons ===== -->
<div class="pb o" style="left:1240px;width:71px;letter-spacing:4px;text-indent:4px">复制</div>
<div class="pb o" style="left:1329.500px;width:102.500px"><span style="position:absolute;left:16.500px;letter-spacing:5px">打印</span><i style="position:absolute;left:69px;top:-1px;width:2px;height:35px;background:#f4711f"></i>
 <svg class="abs" style="left:79.500px;top:13px" width="10" height="8" viewBox="0 0 10 8"><path d="M.6.800 5 6.400 9.400.8" fill="none" stroke="#f4711f" stroke-width="1.100"/></svg></div>
<div class="pb f" style="left:1449px;width:98px">调取订单</div>
<div class="pb f" style="left:1565px;width:98px">明细导入</div>
<div class="pb f" style="left:1680px;width:98px">保存草稿</div>
<div class="pb f" style="left:1796px;width:98px">保存单据</div>

<!-- ===== floating 库 ===== -->
<div class="abs" style="left:1845.500px;top:433.500px;width:52px;height:52px;border:2px solid #f2690f;border-radius:5px;background:#fff;box-shadow:0 2px 10px rgba(244,113,31,.3);text-align:center;line-height:48px;font-size:21px;color:#f4711f;z-index:3">库</div>

<!-- ===== red arrow ===== -->
<svg class="abs" style="left:0;top:0;z-index:6;pointer-events:none" width="1919" height="830" viewBox="0 0 1919 830"><path d="M1454.600 340.400 1625.200 166.800 1617.500 163.600 1648.600 155.300 1639.700 186 1634 179.800z" fill="#f93a3a"/></svg>
</body>
</html>
